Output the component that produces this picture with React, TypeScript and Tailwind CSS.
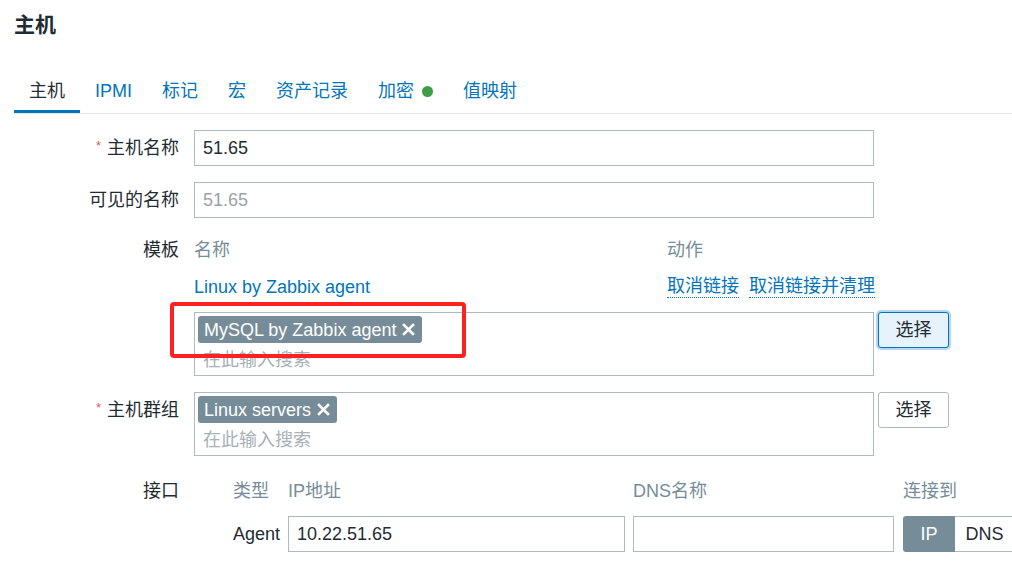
const tabs = ['主机', 'IPMI', '标记', '宏', '资产记录', '加密', '值映射'];

function XIcon() {
  return (
    <svg width="13" height="13" viewBox="0 0 13 13" className="ml-[6px]">
      <path d="M2 2 L11 11 M11 2 L2 11" stroke="white" strokeWidth="2.6" strokeLinecap="square" />
    </svg>
  );
}

function Tag({ label }: { label: string }) {
  return (
    <span className="inline-flex items-center h-[27px] pl-[6px] pr-[7px] rounded-[3px] bg-[#768d99] text-white">
      {label}
      <XIcon />
    </span>
  );
}

function Label({ text, required }: { text: string; required?: boolean }) {
  return (
    <div className="w-[179px] shrink-0 text-right text-[#1f2c33]">
      {required && <span className="text-[#e45959] text-[13px] align-top mr-[6px] relative top-[-2px]">*</span>}
      {text}
    </div>
  );
}

function MultiSelect({ tag, focused }: { tag: string; focused?: boolean }) {
  return (
    <div className="flex items-start">
      <div className="w-[680px] h-[64px] border border-[#acbbc2] p-[3px] flex flex-col items-start">
        <Tag label={tag} />
        <span className="mt-[5px] pl-[5px] text-[#a7b1b7]">在此输入搜索</span>
      </div>
      <button
        className={
          focused
            ? 'ml-[4px] w-[71px] h-[36px] rounded-[3px] border border-[#0275b8] bg-[#e6f2fc] text-[#1f2c33] shadow-[0_0_0_2px_#b5d6f2]'
            : 'ml-[4px] w-[71px] h-[36px] rounded-[3px] border border-[#acbbc2] bg-white text-[#1f2c33]'
        }
      >
        选择
      </button>
    </div>
  );
}

export default function App() {
  return (
    <div className="w-[1012px] h-[564px] overflow-hidden bg-white font-['Liberation_Sans','Noto_Sans_CJK_SC',sans-serif] text-[18px] leading-[24px] text-[#1f2c33]">
      <div className="pl-[14px]">
        <h1 className="pt-[11px] text-[21px] leading-[28px] font-bold text-[#1f2c33]">主机</h1>

        {/* tabs */}
        <ul className="mt-[40px] flex border-b border-[#e5e9eb]">
          {tabs.map((t, i) => (
            <li
              key={t}
              className={
                i === 0
                  ? 'px-[15px] pb-[7px] border-b-[3px] border-[#0275b8] text-[#1f2c33] flex items-center'
                  : 'px-[15px] pb-[7px] border-b-[3px] border-transparent text-[#0275b8] flex items-center'
              }
            >
              {t}
              {t === '加密' && <span className="ml-[8px] w-[11px] h-[11px] rounded-full bg-[#3f9d47]" />}
            </li>
          ))}
        </ul>
      </div>

      {/* form */}
      <div className="mt-[16px] flex flex-col">
        <div className="flex items-center">
          <Label text="主机名称" required />
          <div className="ml-[15px] w-[680px] h-[36px] border border-[#acbbc2] px-[8px] flex items-center">51.65</div>
        </div>

        <div className="mt-[16px] flex items-center">
          <Label text="可见的名称" />
          <div className="ml-[15px] w-[680px] h-[36px] border border-[#acbbc2] px-[8px] flex items-center text-[#9aa3a8]">
            51.65
          </div>
        </div>

        <div className="mt-[20px] flex items-start">
          <Label text="模板" />
          <div className="ml-[15px] flex flex-col">
            <div className="w-[680px] flex text-[#768d99]">
              <span className="w-[473px]">名称</span>
              <span>动作</span>
            </div>
            <div className="mt-[13px] w-[700px] flex items-start whitespace-nowrap">
              <span className="w-[473px] shrink-0 text-[#0275b8]">Linux by Zabbix agent</span>
              <span className="text-[#0275b8] border-b border-dotted border-[#0275b8] leading-[22px]">取消链接</span>
              <span className="ml-[10px] text-[#0275b8] border-b border-dotted border-[#0275b8] leading-[22px]">取消链接并清理</span>
            </div>
            <div className="mt-[13px] relative">
              <MultiSelect tag="MySQL by Zabbix agent" focused />
              <div className="absolute left-[-24px] top-[-10px] w-[296px] h-[56px] border-[4px] border-[#ff2121] rounded-[4px]" />
            </div>
          </div>
        </div>

        <div className="mt-[16px] flex items-start">
          <div className="pt-[6px]">
            <Label text="主机群组" required />
          </div>
          <div className="ml-[15px]">
            <MultiSelect tag="Linux servers" />
          </div>
        </div>

        <div className="mt-[23px] flex items-start">
          <Label text="接口" />
          <div className="ml-[15px] flex flex-col">
            <div className="flex text-[#768d99]">
              <span className="w-[39px]" />
              <span className="w-[55px]">类型</span>
              <span className="w-[345px]">IP地址</span>
              <span className="w-[270px]">DNS名称</span>
              <span>连接到</span>
            </div>
            <div className="mt-[13px] flex items-center">
              <span className="w-[39px]" />
              <span className="w-[55px]">Agent</span>
              <div className="w-[345px]">
                <div className="w-[337px] h-[36px] border border-[#acbbc2] px-[8px] flex items-center">10.22.51.65</div>
              </div>
              <div className="w-[270px]">
                <div className="w-[261px] h-[36px] border border-[#acbbc2]" />
              </div>
              <div className="flex h-[36px] shrink-0">
                <span className="w-[52px] flex items-center justify-center rounded-l-[3px] bg-[#768d99] text-white">IP</span>
                <span className="w-[60px] flex items-center justify-center border border-l-0 border-[#acbbc2]">DNS</span>
              </div>
            </div>
          </div>
        </div>
      </div>
    </div>
  );
}
